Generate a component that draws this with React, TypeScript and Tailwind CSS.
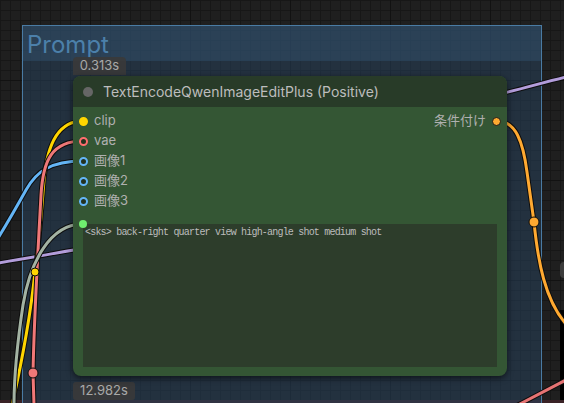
import React from "react";

type Slot = {
  name: string;
  color: string;
  hollow?: boolean;
};

const inputs: Slot[] = [
  { name: "clip", color: "#ffd500" },
  { name: "vae", color: "#ff6e6e", hollow: true },
  { name: "画像1", color: "#64b5f6", hollow: true },
  { name: "画像2", color: "#64b5f6", hollow: true },
  { name: "画像3", color: "#64b5f6", hollow: true },
];

const uiFont = "font-['Inter','Noto_Sans_CJK_JP',sans-serif]";

const SlotDot = ({ color, hollow }: { color: string; hollow?: boolean }) => (
  <span
    className="block h-[9px] w-[9px] shrink-0 rounded-full border-[2px]"
    style={{ borderColor: color, background: hollow ? "#24321f" : color }}
  />
);

// link curves between nodes, each drawn with a dark outline underneath
const links = [
  { d: "M500 94 C 525 88, 545 82, 566 77", color: "#b39ddb" },
  { d: "M-2 263 C 30 258, 55 253, 80 249", color: "#b39ddb" },
  { d: "M83 161 C 50 161, 36 172, 26 190 C 16 208, 8 222, -2 238", color: "#64b5f6" },
  { d: "M83 121 C 58 121, 47 145, 44 180 C 41 220, 38 250, 35 272 C 30 320, 20 370, 12 405", color: "#ffd500" },
  { d: "M83 141 C 52 141, 43 160, 41 195 C 38 250, 34 320, 33 373 L 34 405", color: "#f07878" },
  { d: "M83 224 C 50 224, 30 262, 23 305 C 17 345, 14 380, 14 405", color: "#a3b3a3" },
  { d: "M497 121 C 516 121, 523 142, 527 172 C 531 200, 533 214, 534 222 C 538 262, 545 300, 566 324", color: "#ffa931" },
  { d: "M518 405 L 566 380", color: "#e57373" },
];

const Canvas = () => (
  <div className="relative h-[403px] w-[564px] overflow-hidden bg-[#1f1f1f]">
    {/* canvas grid */}
    <div className="absolute inset-0 bg-[linear-gradient(to_right,#171717_1px,transparent_1px),linear-gradient(to_bottom,#171717_1px,transparent_1px)] bg-size-[10px_10px]" />
    <div className="absolute inset-0 bg-[linear-gradient(to_right,#121212_1px,transparent_1px),linear-gradient(to_bottom,#121212_1px,transparent_1px)] bg-size-[100px_100px] bg-position-[-10px_-20px]" />

    {/* right-hand neighbours peeking in */}
    <div className="absolute left-[560px] top-[262px] h-[16px] w-[10px] rounded-l-sm bg-[#3c3c3c]" />
    <div className="absolute left-[560px] top-[310px] h-[100px] w-[10px] bg-black" />
    <div className="absolute left-[0px] top-[400px] h-[4px] w-[564px] bg-[#3a2226]" />

    {/* group */}
    <div className="absolute left-[22px] top-[25px] h-[400px] w-[520px] border border-[#4a7ba3] bg-[rgba(40,68,96,0.5)]">
      <div className={`flex h-[35px] items-center bg-[rgba(55,90,122,0.4)] pl-[4px] pt-[2px] text-[24px] leading-none text-[#4c80aa] ${uiFont}`}>
        Prompt
      </div>
    </div>

    {/* links */}
    <svg className="absolute inset-0" width={564} height={403} viewBox="0 0 564 403" fill="none">
      {links.map((l, i) => (
        <g key={i}>
          <path d={l.d} stroke="#0d0d0d" strokeWidth={5} strokeLinecap="round" />
          <path d={l.d} stroke={l.color} strokeWidth={3} strokeLinecap="round" />
        </g>
      ))}
      <circle cx={35} cy={272} r={4} fill="#ffd500" stroke="#0d0d0d" strokeWidth={1} />
      <circle cx={33} cy={373} r={5} fill="#f07878" stroke="#0d0d0d" strokeWidth={1} />
      <circle cx={534} cy={222} r={5} fill="#ffa931" stroke="#0d0d0d" strokeWidth={1} />
    </svg>

    {/* execution time badges */}
    <div className={`absolute left-[73px] top-[57px] flex h-[18px] w-[53px] items-center justify-center rounded-t-[4px] bg-[#3a3a3a]/90 text-[13px] text-[#a8a8a8] ${uiFont}`}>
      0.313s
    </div>
    <div className={`absolute left-[73px] top-[382px] flex h-[18px] w-[62px] items-center justify-center rounded-[3px] bg-[#3a3a3a]/90 text-[13px] text-[#a8a8a8] ${uiFont}`}>
      12.982s
    </div>

    {/* node */}
    <div className={`absolute left-[73px] top-[76px] flex h-[300px] w-[434px] flex-col overflow-hidden rounded-[8px] bg-[#345634] shadow-[0_2px_6px_rgba(0,0,0,0.6)] ${uiFont}`}>
      <div className="flex h-[31px] shrink-0 items-center gap-[10px] bg-[#283b28] pl-[10px]">
        <span className="block h-[10px] w-[10px] rounded-full bg-[#666]" />
        <span className="text-[14px] text-[#bdbdbd]">TextEncodeQwenImageEditPlus (Positive)</span>
      </div>
      <div className="relative flex flex-1 flex-col px-[10px] pt-[4px] pb-[9px]">
        {inputs.map((s, i) => (
          <div key={s.name} className="flex h-[20px] items-center justify-between">
            <div className="-ml-[4px] flex items-center gap-[6px]">
              <SlotDot color={s.color} hollow={s.hollow} />
              <span className="text-[13px] text-[#b0b0b0]">{s.name}</span>
            </div>
            {i === 0 && (
              <div className="-mr-[4px] flex items-center gap-[6px]">
                <span className="text-[13px] text-[#b0b0b0]">条件付け</span>
                <span className="block h-[9px] w-[9px] rounded-full border border-[#1a1a1a] bg-[#ffa931]" />
              </div>
            )}
          </div>
        ))}
        <div className="relative mt-[13px] flex-1 bg-[#2d3d2b] px-[2px] pt-[2px]">
          <span className="absolute -left-[4px] -top-[4px] block h-[8px] w-[8px] rounded-full bg-[#6fee6f]" />
          <p className="font-['Liberation_Mono',monospace] text-[10px] leading-[13px] tracking-[-0.8px] text-[#bcbcbc]">
            {"<sks> back-right quarter view high-angle shot medium shot"}
          </p>
        </div>
      </div>
    </div>
  </div>
);

export default function App() {
  return <Canvas />;
}
